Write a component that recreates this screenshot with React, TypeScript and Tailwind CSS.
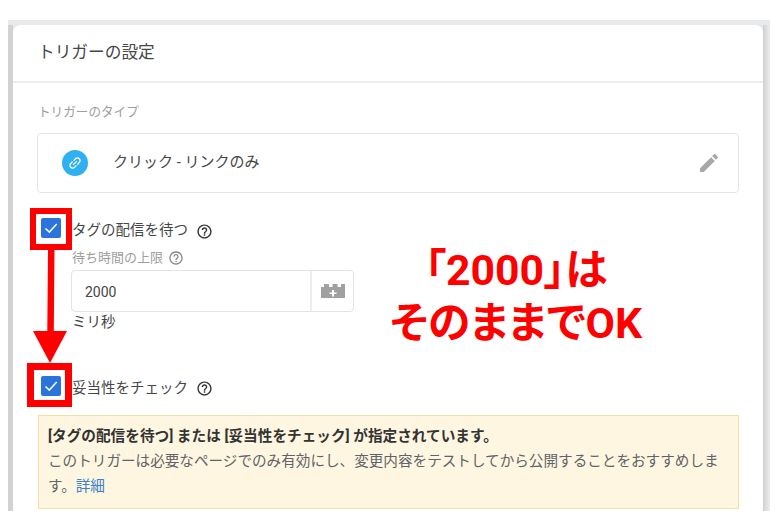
import React from 'react';

const FONT = 'font-["Roboto","Noto_Sans_CJK_JP",sans-serif]';

const HelpIcon = ({ className }: { className?: string }) => (
  <svg viewBox="0 0 24 24" className={className} fill="currentColor">
    <path d="M11 18h2v-2h-2v2zm1-16C6.48 2 2 6.48 2 12s4.48 10 10 10 10-4.48 10-10S17.52 2 12 2zm0 18c-4.41 0-8-3.59-8-8s3.59-8 8-8 8 3.59 8 8-3.59 8-8 8zm0-14c-2.21 0-4 1.79-4 4h2c0-1.1.9-2 2-2s2 .9 2 2c0 2-3 1.75-3 5h2c0-2.25 3-2.5 3-5 0-2.21-1.79-4-4-4z" />
  </svg>
);

const Checkbox = () => (
  <div className="w-5 h-5 rounded-[2px] bg-[#2a74db] flex items-center justify-center shrink-0">
    <svg viewBox="0 0 20 20" className="w-5 h-5" fill="none" stroke="#ffffff" strokeWidth="1.5">
      <path d="M4.5 10.5l3.8 3.6 7.4-8" />
    </svg>
  </div>
);

export default function App() {
  return (
    <div className={`relative w-[782px] h-[526px] bg-white overflow-hidden ${FONT}`}>
      {/* card frame, cut off at the bottom of the capture */}
      <div className="absolute left-[8px] top-[20px] w-[762px] h-[491px] bg-[#e8e9ea] overflow-hidden">
        <div className="absolute left-0 top-[5px] bottom-0 w-[5px] bg-[#d2d2d2]" />
        <div className="absolute right-0 top-[5px] bottom-0 w-[7px] bg-gradient-to-r from-[#cfd0d3] to-[#eceded]" />
      </div>

      <div className="relative ml-[13px] mt-[25px] w-[750px] h-[486px] bg-white rounded-t-lg overflow-hidden float-left">
        <div className="h-[58px] border-b-2 border-[#eeeeee] pl-[25px] flex items-center">
          <span className="text-[16.7px] text-[#444746]">トリガーの設定</span>
        </div>

        <div className="pl-[24px] pr-[24px]">
          <div className="pt-[20px] pl-[1px] h-[50px] text-[12.6px] text-[#9e9e9e] leading-[18px]">トリガーのタイプ</div>

          <div className="h-[60px] border border-[#e3e3e3] rounded-[4px] flex items-center pl-[24px] pr-[17px]">
            <div className="w-[26px] h-[26px] rounded-full bg-[#2fb0f0] flex items-center justify-center -mt-[1px]">
              <svg viewBox="0 0 24 24" className="w-4 h-4 -rotate-45" fill="#ffffff">
                <path d="M3.9 12c0-1.71 1.39-3.1 3.1-3.1h4V7H7c-2.76 0-5 2.24-5 5s2.24 5 5 5h4v-1.9H7c-1.71 0-3.1-1.39-3.1-3.1zM8 13h8v-2H8v2zm9-6h-4v1.9h4c1.71 0 3.1 1.39 3.1 3.1s-1.39 3.1-3.1 3.1h-4V17h4c2.76 0 5-2.24 5-5s-2.24-5-5-5z" />
              </svg>
            </div>
            <span className="ml-[25px] text-[15px] text-[#444746] -mt-[2px]">クリック - リンクのみ</span>
            <svg viewBox="0 0 24 24" className="ml-auto w-6 h-6" fill="#a8a8a8">
              <path d="M3 17.25V21h3.75L17.81 9.94l-3.75-3.75L3 17.25zM20.71 7.04c.39-.39.39-1.02 0-1.41l-2.34-2.34c-.39-.39-1.02-.39-1.41 0l-1.83 1.83 3.75 3.75 1.83-1.83z" />
            </svg>
          </div>

          <div className="mt-[25px] pl-[4px] flex items-center h-[20px]">
            <Checkbox />
            <span className="ml-[11px] text-[14.5px] text-[#444746] mt-[5px]">タグの配信を待つ</span>
            <HelpIcon className="ml-[8px] w-[17px] h-[17px] mt-[6px] text-[#333333]" />
          </div>

          <div className="ml-[35px] mt-[10px] flex items-center h-[20px] text-[13px] text-[#9e9e9e]">
            <span>待ち時間の上限</span>
            <HelpIcon className="ml-[5px] w-[16px] h-[16px] text-[#8a8a8a]" />
          </div>

          <div className="ml-[34px] mt-[2px] w-[283px] h-[42px] border border-[#e3e3e3] rounded-[4px] flex">
            <div className="w-[240px] pl-[13px] pt-[3px] flex items-center text-[14px] text-[#444746] border-r-2 border-[#eeeeee]">2000</div>
            <div className="flex-1 flex items-center justify-center">
              <svg viewBox="0 0 24 14" className="w-[24px] h-[14px]">
                <path d="M0 3h3V0h5v3h3.5V0h5v3H20V0h4v14H0z" fill="#a0a0a0" />
                <path d="M11 6h2v2.5h2.5v1.6H13v2.4h-2v-2.4H8.5V8.5H11z" fill="#ffffff" />
              </svg>
            </div>
          </div>

          <div className="ml-[35px] mt-[1px] h-[20px] flex items-center text-[14.5px] text-[#444746]">ミリ秒</div>

          <div className="mt-[43px] pl-[4px] flex items-center h-[20px]">
            <Checkbox />
            <span className="ml-[11px] text-[14.5px] text-[#444746] mt-[5px]">妥当性をチェック</span>
            <HelpIcon className="ml-[8px] w-[17px] h-[17px] mt-[5px] text-[#333333]" />
          </div>

          <div className="mt-[19px] ml-[1px] w-[701px] h-[94px] bg-[#fef6e0] border border-[#f5dfa3] px-[9px] pt-[8px] text-[14.6px] leading-[25px] text-[#5f6368]">
            <div className="font-bold text-[#333333] text-[14.65px]">[タグの配信を待つ] または [妥当性をチェック] が指定されています。</div>
            <div>このトリガーは必要なページでのみ有効にし、変更内容をテストしてから公開することをおすすめしま</div>
            <div>
              <span>す。</span>
              <a className="text-[#3b82c9]">詳細</a>
            </div>
          </div>
        </div>
      </div>

      {/* red annotations on top of the screenshot */}
      <div className="absolute left-[30px] top-[208px] w-[42px] h-[42px] border-[6px] border-[#ff0000]" />
      <div className="absolute left-[27px] top-[363px] w-[45px] h-[44px] border-[7px] border-[#ff0000]" />
      <svg className="absolute left-[30px] top-[250px]" width="40" height="114" viewBox="0 0 40 114">
        <path d="M18 0h6.5l-.7 81H37L20 113 3 81h14.3z" fill="#ff0000" />
      </svg>
      <div className="absolute left-[370px] top-[244px] w-[292px] text-center text-[42.7px] leading-[53px] font-bold text-[#ff0000] [font-feature-settings:'palt']">
        <div>「2000」は</div>
        <div>そのままでOK</div>
      </div>
    </div>
  );
}
